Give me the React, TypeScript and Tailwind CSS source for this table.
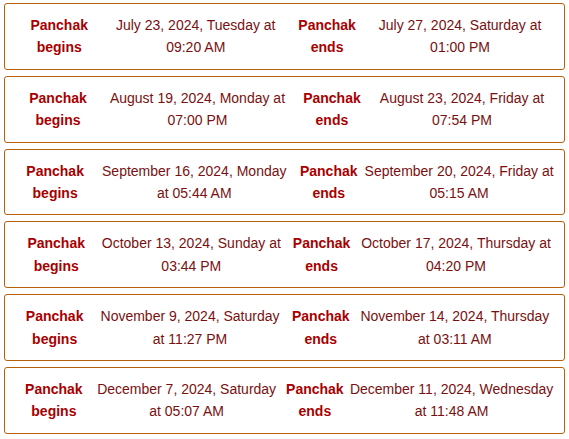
const rows = [
  ["July 23, 2024, Tuesday at 09:20 AM", "July 27, 2024, Saturday at 01:00 PM"],
  ["August 19, 2024, Monday at 07:00 PM", "August 23, 2024, Friday at 07:54 PM"],
  ["September 16, 2024, Monday at 05:44 AM", "September 20, 2024, Friday at 05:15 AM"],
  ["October 13, 2024, Sunday at 03:44 PM", "October 17, 2024, Thursday at 04:20 PM"],
  ["November 9, 2024, Saturday at 11:27 PM", "November 14, 2024, Thursday at 03:11 AM"],
  ["December 7, 2024, Saturday at 05:07 AM", "December 11, 2024, Wednesday at 11:48 AM"],
];

function PanchakCard({ begins, ends }: { begins: string; ends: string }) {
  return (
    <div className="flex rounded-[3px] border border-[#b85f0b] bg-white p-[10px] text-center text-[14px] leading-[22.4px]">
      <div className="font-bold text-[#a80000]">Panchak begins</div>
      <div className="text-[#7a1010]">{begins}</div>
      <div className="font-bold text-[#a80000]">Panchak ends</div>
      <div className="text-[#7a1010]">{ends}</div>
    </div>
  );
}

export default function App() {
  return (
    <div className="flex w-[569px] flex-col gap-[6px] px-[4px] pt-[3px] font-['Liberation_Sans',Arial,sans-serif]">
      {rows.map(([b, e], i) => (
        <PanchakCard key={i} begins={b} ends={e} />
      ))}
    </div>
  );
}
